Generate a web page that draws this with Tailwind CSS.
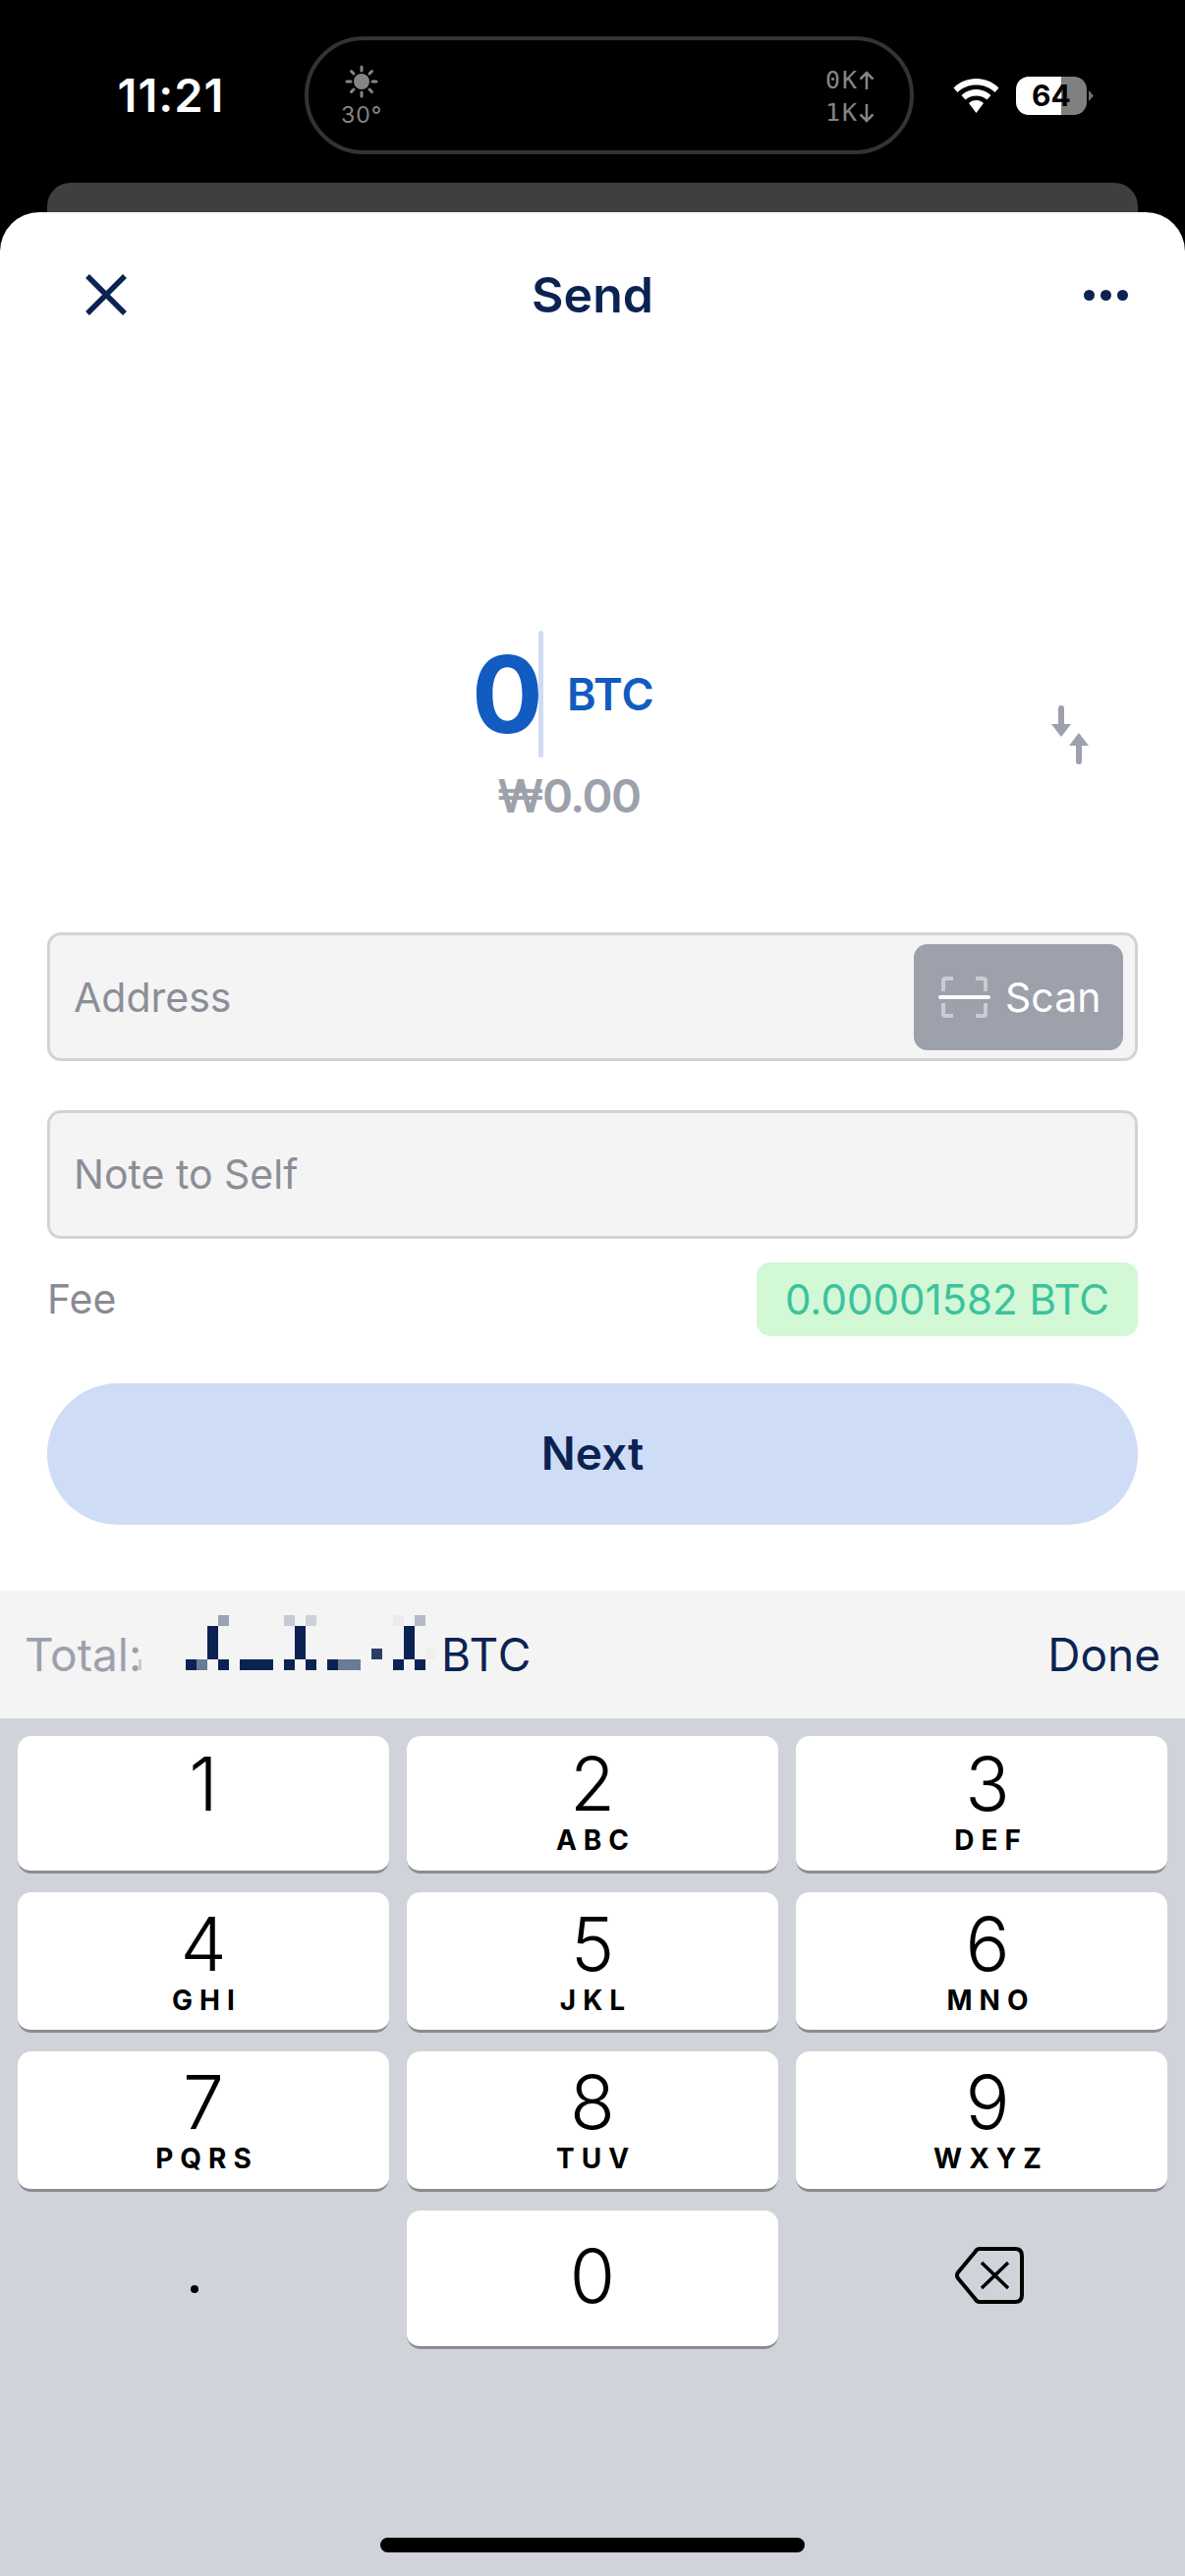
<!DOCTYPE html>
<html>
<head>
<meta charset="utf-8">
<script src="https://cdn.jsdelivr.net/npm/@tailwindcss/browser@4"></script>
</head>
<body class="m-0 bg-black">
<div class="w-[1206px] h-[2622px] flex flex-col overflow-hidden bg-black font-['Inter',sans-serif]">
  <!-- status bar -->
  <div class="h-[186px] pt-[37px] pl-[119px] flex items-start text-white">
    <div class="w-[110px] mt-[32px] text-[47px] leading-[56px] font-semibold tracking-[1px] text-center whitespace-nowrap">11:21</div>
    <div class="ml-[81px] w-[620px] h-[120px] rounded-[60px] border-[4px] border-[#333333] flex justify-between pl-[33px] pr-[36px] text-[#858585]">
      <div class="flex flex-col items-center">
        <svg class="mt-[25px]" width="34" height="34" viewBox="0 0 34 34" fill="none" stroke="#858585" stroke-width="3" stroke-linecap="round"><circle cx="17" cy="17" r="8" fill="#858585" stroke="none"/><path d="M17 2v4M17 28v4M2 17h4M28 17h4M6.500 6.500l2.500 2.500M27.500 6.500l-2.500 2.500M6.500 27.500l2.500-2.500M27.500 27.500l-2.500-2.500"/></svg>
        <div class="mt-[4px] text-[23px] leading-[26px] tracking-[1px]">30°</div>
      </div>
      <div class="mt-[24px] flex flex-col text-[25px] leading-[33px] tracking-[2px] font-['DejaVu_Sans_Mono',monospace]">
        <div class="flex items-center"><span>0K</span><svg width="16" height="20" viewBox="0 0 16 20" fill="none" stroke="#858585" stroke-width="2.500"><path d="M8 19V2M1.500 8.500L8 2L14.500 8.500"/></svg></div>
        <div class="flex items-center"><span>1K</span><svg width="16" height="20" viewBox="0 0 16 20" fill="none" stroke="#858585" stroke-width="2.500"><path d="M8 1V18M1.500 11.500L8 18L14.500 11.500"/></svg></div>
      </div>
    </div>
    <svg class="ml-[40px] mt-[43px]" width="47" height="35" viewBox="0 0 46 35" fill="#ffffff"><path d="M23 0C14 0 6 3.500 0 9.500L4 14C9 9 15.500 6.500 23 6.500S37 9 42 14L46 9.500C40 3.500 32 0 23 0Z"/><path d="M23 11C17 11 12 13.500 8 17L12 21.500C15 19 19 17.500 23 17.500S31 19 34 21.500L38 17C34 13.500 29 11 23 11Z"/><path d="M23 22C20 22 17.500 23 15.500 25L23 35L30.500 25C28.500 23 26 22 23 22Z"/></svg>
    <div class="ml-[17px] mt-[41px] w-[72px] h-[39px] rounded-[13px] overflow-hidden flex items-center justify-center bg-[linear-gradient(90deg,#ffffff_64%,#808080_64%)] text-black text-[30px] leading-[39px] font-bold">64</div>
    <svg class="ml-[2px] mt-[55px]" width="5" height="11" viewBox="0 0 5 11" fill="#6e6e6e"><path d="M0 0L5 5.500L0 11Z"/></svg>
  </div>
  <div class="h-[30px] mx-[48px] rounded-t-[24px] bg-[#3f3f3f]"></div>
  <!-- sheet -->
  <div class="h-[1403px] bg-white rounded-t-[40px] flex flex-col px-[48px]">
    <div class="h-[168px] flex items-center justify-between relative">
      <svg class="ml-[39px]" width="42" height="42" viewBox="0 0 42 42" fill="none" stroke="#0b2352" stroke-width="5.500"><path d="M2 2L40 40M40 2L2 40"/></svg>
      <div class="absolute left-0 right-0 text-center text-[50px] leading-[60px] font-semibold text-[#0b2352]">Send</div>
      <div class="mr-[10px] flex gap-[6px]">
        <div class="w-[11px] h-[11px] rounded-full bg-[#0b2352]"></div>
        <div class="w-[11px] h-[11px] rounded-full bg-[#0b2352]"></div>
        <div class="w-[11px] h-[11px] rounded-full bg-[#0b2352]"></div>
      </div>
    </div>
    <!-- amount -->
    <div class="h-[565px] relative flex flex-col pt-[258px]">
      <div class="h-[129px] flex items-center pl-[432px]">
        <div class="w-[68px] text-center text-[108px] leading-[129px] font-bold text-[#115bc1]">0</div>
        <div class="w-[5px] h-[129px] rounded-full bg-[#d0dcf5]"></div>
        <div class="ml-[24px] text-[45px] leading-[52px] font-semibold text-[#115bc1]">BTC</div>
      </div>
      <div class="mt-[10px] pl-[458px] text-[47px] leading-[58px] font-semibold tracking-[-1.5px] text-[#9ca1ab]">₩0.00</div>
      <svg class="absolute left-[1022px] top-[334px]" width="38" height="60" viewBox="0 0 38 60" fill="#9ca1ab"><rect x="7" y="0" width="6" height="26" rx="3"/><path d="M0 19L20 19L10 32Z"/><rect x="25" y="34" width="6" height="26" rx="3"/><path d="M18 41L38 41L28 28Z"/></svg>
    </div>
    <!-- address -->
    <div class="h-[131px] rounded-[14px] border-[3px] border-[#d3d3d3] bg-[#f4f4f4] flex items-center justify-between pl-[24px] pr-[12px]">
      <div class="text-[41px] leading-[50px] text-[#8b8e97]">Address</div>
      <div class="w-[213px] h-[108px] rounded-[14px] bg-[#9ca1ab] flex items-center pl-[25px]">
        <svg width="53" height="42" viewBox="0 0 53 42" fill="none" stroke="#c9ccd2" stroke-width="4"><path d="M5 15V4Q5 2 7 2H15M38 2H46Q48 2 48 4V15M5 27V38Q5 40 7 40H15M38 40H46Q48 40 48 38V27"/><path d="M2 21H51" stroke="#ffffff" stroke-linecap="round"/></svg>
        <div class="ml-[15px] text-[41px] leading-[50px] text-white">Scan</div>
      </div>
    </div>
    <!-- note -->
    <div class="mt-[50px] h-[131px] rounded-[14px] border-[3px] border-[#d3d3d3] bg-[#f4f4f4] flex items-center pl-[24px] pb-[2px]">
      <div class="text-[41px] leading-[50px] text-[#8b8e97]">Note to Self</div>
    </div>
    <!-- fee -->
    <div class="mt-[24px] h-[75px] flex items-center justify-between">
      <div class="pb-[2px] text-[41px] leading-[50px] text-[#888b94]">Fee</div>
      <div class="w-[388px] h-[75px] rounded-[14px] bg-[#d3f8d6] flex items-center justify-center text-[42px] leading-[50px] text-[#3bc39c]">0.00001582 BTC</div>
    </div>
    <!-- next -->
    <div class="mt-[48px] h-[144px] rounded-[72px] bg-[#cfdcf5] flex items-center justify-center pb-[2px] text-[46px] leading-[56px] font-semibold text-[#0b2352]">Next</div>
  </div>
  <!-- toolbar -->
  <div class="h-[130px] bg-[#f4f4f4] relative flex items-center pl-[25px] pr-[25px] justify-between text-[46px] leading-[54px]">
    <div class="text-[#9ca1ab]">Total:</div>
    <svg class="absolute left-0 top-0" width="560" height="130" viewBox="0 1619 560 130" shape-rendering="crispEdges">
      <rect x="141" y="1689" width="3" height="11" fill="#c8ccd4"/>
      <rect x="189" y="1689" width="11" height="11" fill="#0b2352"/>
      <rect x="200" y="1689" width="11" height="11" fill="#6b7a96"/>
      <rect x="211" y="1655" width="11" height="34" fill="#0b2352"/>
      <rect x="222" y="1689" width="11" height="11" fill="#0b2352"/>
      <rect x="222" y="1644" width="11" height="11" fill="#9aa3b5"/>
      <rect x="244" y="1689" width="34" height="11" fill="#0b2352"/>
      <rect x="289" y="1644" width="11" height="11" fill="#c5cad4"/>
      <rect x="311" y="1644" width="11" height="11" fill="#ced1d9"/>
      <rect x="300" y="1655" width="11" height="34" fill="#0b2352"/>
      <rect x="289" y="1689" width="11" height="11" fill="#0b2352"/>
      <rect x="311" y="1689" width="11" height="11" fill="#0b2352"/>
      <rect x="333" y="1689" width="11" height="11" fill="#0b2352"/>
      <rect x="344" y="1689" width="23" height="11" fill="#6b7a96"/>
      <rect x="378" y="1678" width="11" height="11" fill="#2b3f66"/>
      <rect x="400" y="1644" width="11" height="11" fill="#e9eaed"/>
      <rect x="422" y="1644" width="11" height="11" fill="#b5bac8"/>
      <rect x="411" y="1655" width="11" height="34" fill="#0b2352"/>
      <rect x="400" y="1689" width="11" height="11" fill="#0b2352"/>
      <rect x="422" y="1689" width="11" height="11" fill="#0b2352"/>
      <rect x="433" y="1678" width="10" height="11" fill="#efefef"/>
    </svg>
    <div class="absolute left-[449px] tracking-[1px] text-[#0b2352]">BTC</div>
    <div class="text-[#0b2352]">Done</div>
  </div>
  <!-- keyboard -->
  <div class="flex-1 bg-[#d0d3da] relative px-[18px] pt-[18px]">
    <div class="grid grid-cols-3 grid-rows-[140px_143px_143px_141px] gap-x-[18px] gap-y-[19px] text-black text-center">
      <div class="rounded-[14px] bg-white border-b-[3px] border-[#8a8c92] pt-[6px]"><div class="text-[75px] leading-[85px] font-[350]">1</div></div>
      <div class="rounded-[14px] bg-white border-b-[3px] border-[#8a8c92] pt-[6px]"><div class="text-[75px] leading-[85px] font-[350]">2</div><div class="pl-[7px] text-[28px] leading-[30px] font-bold tracking-[7px]">ABC</div></div>
      <div class="rounded-[14px] bg-white border-b-[3px] border-[#8a8c92] pt-[6px] pl-[12px]"><div class="text-[75px] leading-[85px] font-[350]">3</div><div class="pl-[7px] text-[28px] leading-[30px] font-bold tracking-[7px]">DEF</div></div>
      <div class="rounded-[14px] bg-white border-b-[3px] border-[#8a8c92] pt-[10px]"><div class="text-[75px] leading-[85px] font-[350]">4</div><div class="pl-[7px] text-[28px] leading-[30px] font-bold tracking-[7px]">GHI</div></div>
      <div class="rounded-[14px] bg-white border-b-[3px] border-[#8a8c92] pt-[10px]"><div class="text-[75px] leading-[85px] font-[350]">5</div><div class="pl-[7px] text-[28px] leading-[30px] font-bold tracking-[7px]">JKL</div></div>
      <div class="rounded-[14px] bg-white border-b-[3px] border-[#8a8c92] pt-[10px] pl-[12px]"><div class="text-[75px] leading-[85px] font-[350]">6</div><div class="pl-[7px] text-[28px] leading-[30px] font-bold tracking-[7px]">MNO</div></div>
      <div class="rounded-[14px] bg-white border-b-[3px] border-[#8a8c92] pt-[9px]"><div class="text-[75px] leading-[85px] font-[350]">7</div><div class="pl-[7px] text-[28px] leading-[30px] font-bold tracking-[7px]">PQRS</div></div>
      <div class="rounded-[14px] bg-white border-b-[3px] border-[#8a8c92] pt-[9px]"><div class="text-[75px] leading-[85px] font-[350]">8</div><div class="pl-[7px] text-[28px] leading-[30px] font-bold tracking-[7px]">TUV</div></div>
      <div class="rounded-[14px] bg-white border-b-[3px] border-[#8a8c92] pt-[9px] pl-[12px]"><div class="text-[75px] leading-[85px] font-[350]">9</div><div class="pl-[7px] text-[28px] leading-[30px] font-bold tracking-[7px]">WXYZ</div></div>
      <div class="flex justify-center pr-[18px]"><div class="mt-[76px] w-[8px] h-[8px] rounded-full bg-black"></div></div>
      <div class="rounded-[14px] bg-white border-b-[3px] border-[#8a8c92] pt-[24px]"><div class="text-[75px] leading-[85px] font-[350]">0</div></div>
      <div class="flex justify-center pt-[37px] pl-[16px]">
        <svg width="70" height="58" viewBox="0 0 70 58" fill="none" stroke="#000000" stroke-width="4" stroke-linejoin="round"><path d="M25 2H61Q68 2 68 9V49Q68 56 61 56H25Q22 56 20.500 53L3 32Q1 29 3 26L20.500 5Q22 2 25 2Z"/><path d="M27 16L54 42M54 16L27 42" stroke-width="3.500"/></svg>
      </div>
    </div>
    <div class="absolute left-[387px] top-[834px] w-[432px] h-[15px] rounded-full bg-black"></div>
  </div>
</div>
</body>
</html>
